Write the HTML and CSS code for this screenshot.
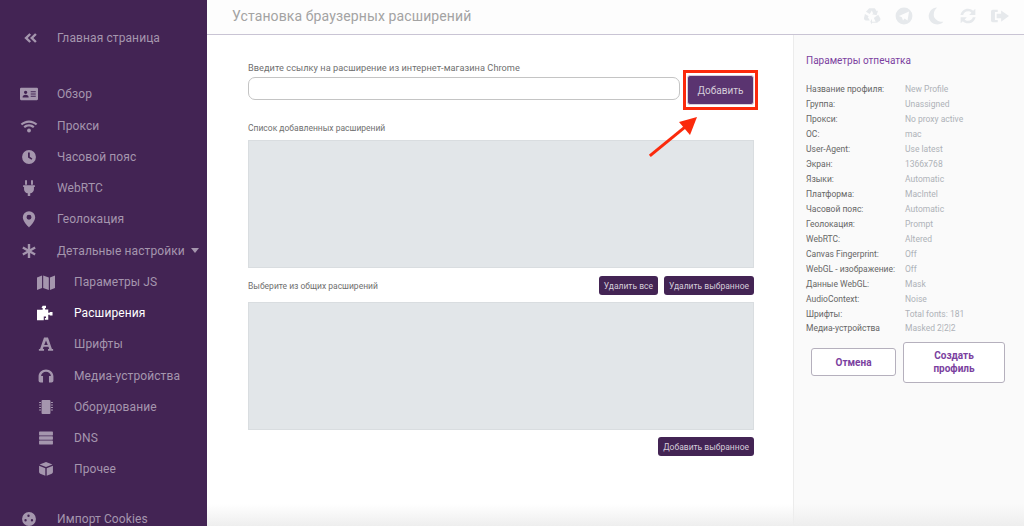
FILE: index.html
```html
<!DOCTYPE html>
<html lang="ru">
<head>
  <meta charset="UTF-8">
  <title>Установка браузерных расширений</title>
  <link rel="stylesheet" href="styles.css">
</head>
<body>
  <div class="app">
    <nav class="sidebar">
      <a class="item home">
        <svg class="ico" viewBox="0 0 16 16"><path d="M7.300 2.500 1.500 8l5.800 5.500 1.900-1.900L5.400 8l3.800-3.600zM13.800 2.500 8 8l5.800 5.500 1.900-1.900L11.900 8l3.800-3.600z"/></svg>
        Главная страница
      </a>
      <a class="item">
        <svg class="ico" viewBox="0 0 16 16"><path fill-rule="evenodd" d="M1 2.500h14a1 1 0 0 1 1 1v9a1 1 0 0 1-1 1H1a1 1 0 0 1-1-1v-9a1 1 0 0 1 1-1zM5 5a1.500 1.500 0 1 0 0 3 1.500 1.500 0 0 0 0-3zM2.300 11h5.400c0-1.500-1-2.300-2.700-2.300S2.300 9.500 2.300 11zM9.500 5.500V6.500h4.500V5.500zM9.500 7.500V8.500h4.500V7.500zM9.500 9.500v1h4.500v-1z"/></svg>
        Обзор
      </a>
      <a class="item">
        <svg class="ico" viewBox="0 0 16 16"><path d="M8 3C5.200 3 2.600 4.100.6 6l1.300 1.400C3.500 5.900 5.700 5 8 5s4.500.9 6.100 2.400L15.400 6C13.400 4.100 10.800 3 8 3z"/><path d="M8 6.500c-1.900 0-3.600.7-4.900 1.900l1.300 1.400C5.400 8.900 6.600 8.400 8 8.400s2.600.5 3.600 1.400l1.300-1.400C11.600 7.200 9.900 6.500 8 6.500z"/><circle cx="8" cy="12" r="1.700"/></svg>
        Прокси
      </a>
      <a class="item">
        <svg class="ico sm" viewBox="0 0 16 16"><path fill-rule="evenodd" d="M8 1a7 7 0 1 1 0 14A7 7 0 0 1 8 1zM7 3.500V8.500l3.500 2.200.9-1.300L8.800 7.700V3.500z"/></svg>
        Часовой пояс
      </a>
      <a class="item">
        <svg class="ico" viewBox="0 0 16 16"><path d="M4.500 1h1.700v4H4.500zM9.800 1h1.700v4H9.800zM2.800 5.500h10.400v1.600h-.8V9c0 2-1.500 3.400-3.300 3.700V15H6.900v-2.300C5.100 12.400 3.600 11 3.600 9V7.100h-.8z"/></svg>
        WebRTC
      </a>
      <a class="item">
        <svg class="ico" viewBox="0 0 16 16"><path fill-rule="evenodd" d="M8 1a5.500 5.500 0 0 1 5.500 5.500C13.500 10 9.500 14 8 15.500 6.500 14 2.500 10 2.500 6.500A5.500 5.500 0 0 1 8 1zm0 3.300a2.200 2.200 0 1 0 0 4.400 2.200 2.200 0 0 0 0-4.400z"/></svg>
        Геолокация
      </a>
      <a class="item">
        <svg class="ico sm" viewBox="0 0 16 16"><path d="M6.800 1h2.400v5.100l4.400-2.600 1.200 2.100L10.400 8l4.400 2.400-1.200 2.100-4.400-2.600V15H6.800V9.900l-4.400 2.600-1.200-2.100L5.600 8 1.200 5.600l1.200-2.100 4.400 2.600z"/></svg>
        Детальные настройки <span class="caret"></span>
      </a>
      <a class="item sub">
        <svg class="ico" viewBox="0 0 16 16"><path d="M0 4l4.500-1.700v11L0 15zM5.500 2.300l5 1.700v11l-5-1.700zM11.500 4 16 2.300V13.300L11.500 15z"/></svg>
        Параметры JS
      </a>
      <a class="item sub active">
        <svg class="ico" viewBox="0 0 16 16"><path d="M5 1.500h3v2H7.200v1.300H10v3h1.300V7h2.500v3.200h-2.500v-.7H10V14H7V12.500h1V11H6v3.500H0V5h5V3.500H4z"/></svg>
        Расширения
      </a>
      <a class="item sub">
        <svg class="ico sm" viewBox="0 0 16 16"><path fill-rule="evenodd" d="M6 1.500h4l4 11.500h1.200v1.800H10v-1.800h1.200l-.7-2.200H5.500l-.7 2.200H6v1.800H.8v-1.800H2zM8 4.500 6.200 9h3.600z"/></svg>
        Шрифты
      </a>
      <a class="item sub">
        <svg class="ico sm" viewBox="0 0 16 16"><path d="M8 1.500c-4.200 0-7.500 3-7.500 7v4c0 1.200.8 2 2 2H5V8H3c.3-2.500 2.400-4.300 5-4.300S12.700 5.500 13 8h-2v6.500h2.500c1.200 0 2-.8 2-2v-4c0-4-3.300-7-7.500-7z"/></svg>
        Медиа-устройства
      </a>
      <a class="item sub">
        <svg class="ico sm" viewBox="0 0 16 16"><path d="M4.500 1h7a1 1 0 0 1 1 1v12a1 1 0 0 1-1 1h-7a1 1 0 0 1-1-1V2a1 1 0 0 1 1-1zM1 3h2v1H1zM1 5.500h2v1H1zM1 8h2v1H1zM1 10.500h2v1H1zM13 3h2v1h-2zM13 5.500h2v1h-2zM13 8h2v1h-2zM13 10.500h2v1h-2z"/></svg>
        Оборудование
      </a>
      <a class="item sub">
        <svg class="ico sm" viewBox="0 0 16 16"><path d="M1.500 1.500h13a.5.5 0 0 1 .5.500v3a.5.5 0 0 1-.5.500h-13A.5.5 0 0 1 1 5V2a.5.5 0 0 1 .5-.5zM1.500 6.300h13a.5.5 0 0 1 .5.500v2.500a.5.5 0 0 1-.5.500h-13a.5.5 0 0 1-.5-.5V6.800a.5.5 0 0 1 .5-.5zM1.500 10.500h13a.5.5 0 0 1 .5.500v3a.5.5 0 0 1-.5.500h-13A.5.5 0 0 1 1 14v-3a.5.5 0 0 1 .5-.5z"/></svg>
        DNS
      </a>
      <a class="item sub">
        <svg class="ico sm" viewBox="0 0 16 16"><path d="M8 1l6.500 2.500L8 6 1.500 3.500zM1 4.800l6.300 2.400v7.600L2.200 12.800A2 2 0 0 1 1 11zM15 4.800V11a2 2 0 0 1-1.200 1.800l-5.100 2V7.200z"/></svg>
        Прочее
      </a>
      <a class="item cookies">
        <svg class="ico sm" viewBox="0 0 16 16"><path fill-rule="evenodd" d="M8 1a7 7 0 1 1 0 14A7 7 0 0 1 8 1zM7.500 3.500a1.200 1.200 0 1 0 0 2.400 1.200 1.200 0 0 0 0-2.400zM4.500 8a1.200 1.200 0 1 0 0 2.400 1.200 1.200 0 0 0 0-2.400zM11 8a1.200 1.200 0 1 0 0 2.400 1.200 1.200 0 0 0 0-2.400z"/></svg>
        Импорт Cookies
      </a>
    </nav>

    <div class="content">
      <header class="topbar">
        <h1>Установка браузерных расширений</h1>
        <div class="topbar-icons">
          <svg viewBox="0 0 16 16"><path d="M5.500 1h5l1.700 2.800 1.200-.7-1.300 4.300-4.200-1 1.200-.7L7.800 3.200 6 6.300 2.600 4.300zM1.700 6.300l3.500 2-1 .5 1.900 3.200H3c-1.500 0-2.700-1.600-1.900-3zM13.500 6.800l1.700 2.900c.8 1.400-.2 3.300-1.900 3.300h-2l-1.700-3.200 3.900-3zM8 10.500 6.500 13 8 15.500V14h4.500l1.300-1H8z"/></svg>
          <svg viewBox="0 0 16 16"><path fill-rule="evenodd" d="M8 .5a7.500 7.500 0 1 1 0 15 7.500 7.500 0 0 1 0-15zM3.500 8l2.600 1 1 3 1.500-1.800 2.500 1.800L12.500 4z"/></svg>
          <svg viewBox="0 0 16 16"><path d="M9 .5a7.500 7.500 0 1 0 5.600 12.500C9.500 13.500 6 10 6 7c0-2.800 1.300-5 3-6.500z"/></svg>
          <svg viewBox="0 0 16 16"><path d="M8 1.500c1.800 0 3.400.7 4.600 1.900L14.500 1.500V7H9l2-2C10.200 4.200 9.200 3.800 8 3.800 5.900 3.800 4.200 5.100 3.700 7H1.300C1.900 3.900 4.700 1.500 8 1.500zM1.500 9H7l-2 2c.8.800 1.800 1.200 3 1.200 2.100 0 3.800-1.300 4.300-3.200h2.400c-.6 3.100-3.400 5.500-6.700 5.500-1.800 0-3.400-.7-4.600-1.900L1.500 14.500z"/></svg>
          <svg viewBox="0 0 16 16"><path d="M1.500 2.500H6v2H3.500v7H6v2H1.500A1.500 1.500 0 0 1 0 12V4a1.500 1.500 0 0 1 1.500-1.500zM9 3l7 5-7 5v-3H5V6h4z"/></svg>
        </div>
      </header>

      <div class="body">
        <main class="main">
          <label class="lbl first">Введите ссылку на расширение из интернет-магазина Chrome</label>
          <div class="url-row">
            <input class="url" type="text">
            <span class="highlight"><button type="button" class="btn btn-add">Добавить</button></span>
          </div>

          <label class="lbl list-lbl">Список добавленных расширений</label>
          <div class="box"></div>

          <div class="shared-row">
            <label class="lbl">Выберите из общих расширений</label>
            <div class="actions">
              <button type="button" class="btn">Удалить все</button>
              <button type="button" class="btn">Удалить выбранное</button>
            </div>
          </div>
          <div class="box"></div>

          <div class="bottom-row">
            <button type="button" class="btn">Добавить выбранное</button>
          </div>

          <svg class="arrow" viewBox="0 0 60 54"><path d="M6 44 40 16" stroke="#fb2a0c" stroke-width="3" stroke-linecap="square"/><path d="M52 6 34 11 45 24z" fill="#fb2a0c"/></svg>
        </main>

        <aside class="panel">
          <h2>Параметры отпечатка</h2>
          <dl class="params">
            <div><dt>Название профиля:</dt><dd>New Profile</dd></div>
            <div><dt>Группа:</dt><dd>Unassigned</dd></div>
            <div><dt>Прокси:</dt><dd>No proxy active</dd></div>
            <div><dt>ОС:</dt><dd>mac</dd></div>
            <div><dt>User-Agent:</dt><dd>Use latest</dd></div>
            <div><dt>Экран:</dt><dd>1366x768</dd></div>
            <div><dt>Языки:</dt><dd>Automatic</dd></div>
            <div><dt>Платформа:</dt><dd>MacIntel</dd></div>
            <div><dt>Часовой пояс:</dt><dd>Automatic</dd></div>
            <div><dt>Геолокация:</dt><dd>Prompt</dd></div>
            <div><dt>WebRTC:</dt><dd>Altered</dd></div>
            <div><dt>Canvas Fingerprint:</dt><dd>Off</dd></div>
            <div><dt>WebGL - изображение:</dt><dd>Off</dd></div>
            <div><dt>Данные WebGL:</dt><dd>Mask</dd></div>
            <div><dt>AudioContext:</dt><dd>Noise</dd></div>
            <div><dt>Шрифты:</dt><dd>Total fonts: 181</dd></div>
            <div><dt>Медиа-устройства</dt><dd>Masked 2|2|2</dd></div>
          </dl>
          <div class="panel-btns">
            <button type="button" class="outline cancel">Отмена</button>
            <button type="button" class="outline create">Создать профиль</button>
          </div>
        </aside>
      </div>
      <div class="fade"></div>
    </div>
  </div>
</body>
</html>
```

FILE: styles.css
```css
* {
  box-sizing: border-box;
}
html, body {
  margin: 0;
  height: 526px;
  overflow: hidden;
}
body {
  font-family: Roboto, "Liberation Sans", sans-serif;
  background: #fff;
}
.app {
  display: flex;
  height: 526px;
}

/* Меню слева */
.sidebar {
  flex: 0 0 207px;
  background: #432454;
  padding-top: 22px;
  overflow: hidden;
}
.item {
  display: flex;
  align-items: center;
  height: 31.25px;
  padding-left: 20px;
  font-size: 12px;
  letter-spacing: .1px;
  color: #a596ae;
  white-space: nowrap;
}
.item .ico {
  flex: 0 0 18px;
  width: 18px;
  height: 18px;
  margin-right: 19px;
  fill: #a596ae;
}
.item .ico.sm {
  transform: scale(.88);
}
.item.sub {
  padding-left: 37px;
}
.item.active {
  color: #fff;
}
.item.active .ico {
  fill: #fff;
}
.item.home {
  margin-bottom: 25.500px;
}
.item.home .ico {
  width: 14px;
  flex-basis: 14px;
  margin: 0 20px 0 3px;
}
.item.cookies {
  margin-top: 18px;
}
.caret {
  margin-left: 6px;
  border-left: 4.500px solid transparent;
  border-right: 4.500px solid transparent;
  border-top: 5px solid #a596ae;
}

/* Шапка */
.content {
  position: relative;
  flex: 1;
  display: flex;
  flex-direction: column;
  min-width: 0;
}
.topbar {
  flex: 0 0 35px;
  display: flex;
  align-items: center;
  justify-content: space-between;
  padding: 0 15px 2px 25px;
  background: #fdfdfd;
  border-bottom: 1px solid #c9c4d4;
}
.topbar h1 {
  margin: 0;
  font-size: 14px;
  font-weight: 400;
  letter-spacing: .12px;
  color: #a3a3a3;
}
.topbar-icons {
  display: flex;
  gap: 14px;
}
.topbar-icons svg {
  width: 18px;
  height: 18px;
  fill: #e6e9ec;
}

.body {
  flex: 1;
  display: flex;
  min-height: 0;
}

/* Основная часть */
.main {
  position: relative;
  flex: 0 0 586px;
  padding: 27px 39px 0 41px;
}
.lbl {
  display: block;
  font-size: 8.500px;
  color: #6f6f6f;
}
.lbl.first {
  font-size: 9.200px;
  letter-spacing: .05px;
  line-height: 12px;
}
.url-row {
  display: flex;
  align-items: center;
  height: 33px;
  margin-top: 1px;
}
.url {
  flex: 1;
  min-width: 0;
  height: 23px;
  margin-top: -7px;
  border: 1px solid #c4c4c4;
  border-radius: 7px;
  background: #fff;
}
.highlight {
  display: flex;
  margin: -3px -4px 0 3px;
  border: 3px solid #fb2a0c;
  padding: 2px 1px;
}
.btn {
  height: 19px;
  padding: 0 5px;
  border: 0;
  border-radius: 3px;
  background: #432454;
  color: #d5cdd9;
  font-family: inherit;
  font-size: 8.500px;
  white-space: nowrap;
}
.btn-add {
  width: 67px;
  height: 30px;
  background: #5a3470;
  font-size: 10px;
  border: 1px solid #d8d0dc;
}
.list-lbl {
  margin-top: 14px;
  line-height: 12px;
}
.box {
  height: 128px;
  background: #e2e6e9;
  border: 1px solid #d9dde0;
}
.list-lbl + .box {
  margin-top: 6px;
}
.shared-row {
  display: flex;
  align-items: center;
  justify-content: space-between;
  height: 19px;
  margin: 8px 0 7px;
}
.actions {
  display: flex;
  gap: 6px;
}
.bottom-row {
  display: flex;
  justify-content: flex-end;
  margin-top: 7px;
}
.arrow {
  position: absolute;
  left: 438px;
  top: 76px;
  width: 60px;
  height: 54px;
}

/* Параметры справа */
.panel {
  flex: 1;
  padding: 0 18px 0 12px;
  background: #fafafa;
  border-left: 1px solid #ececec;
}
.panel h2 {
  margin: 19px 0 0;
  font-size: 10px;
  line-height: 13px;
  font-weight: 400;
  color: #7b3fa0;
}
.params {
  margin: 15px 0 0;
}
.params div {
  display: flex;
  height: 14.950px;
  align-items: center;
  font-size: 8.500px;
}
.params dt {
  flex: 0 0 99px;
  color: #666;
  white-space: nowrap;
}
.params dd {
  margin: 0;
  color: #aeb2b8;
  white-space: nowrap;
}
.panel-btns {
  display: flex;
  align-items: center;
  gap: 7px;
  margin-top: 6px;
  padding-left: 5px;
}
.outline {
  flex: none;
  border: 1px solid #b5b0bd;
  border-radius: 3px;
  background: #fff;
  color: #7b3fa0;
  font-family: inherit;
  font-size: 10px;
  font-weight: 700;
  line-height: 13px;
}
.cancel {
  width: 85px;
  height: 28px;
}
.create {
  width: 102px;
  height: 41px;
  padding: 0 18px;
}

.fade {
  position: absolute;
  left: 0;
  right: 0;
  bottom: 0;
  height: 22px;
  background: linear-gradient(rgba(240, 240, 240, 0), #eee);
  pointer-events: none;
}
```
